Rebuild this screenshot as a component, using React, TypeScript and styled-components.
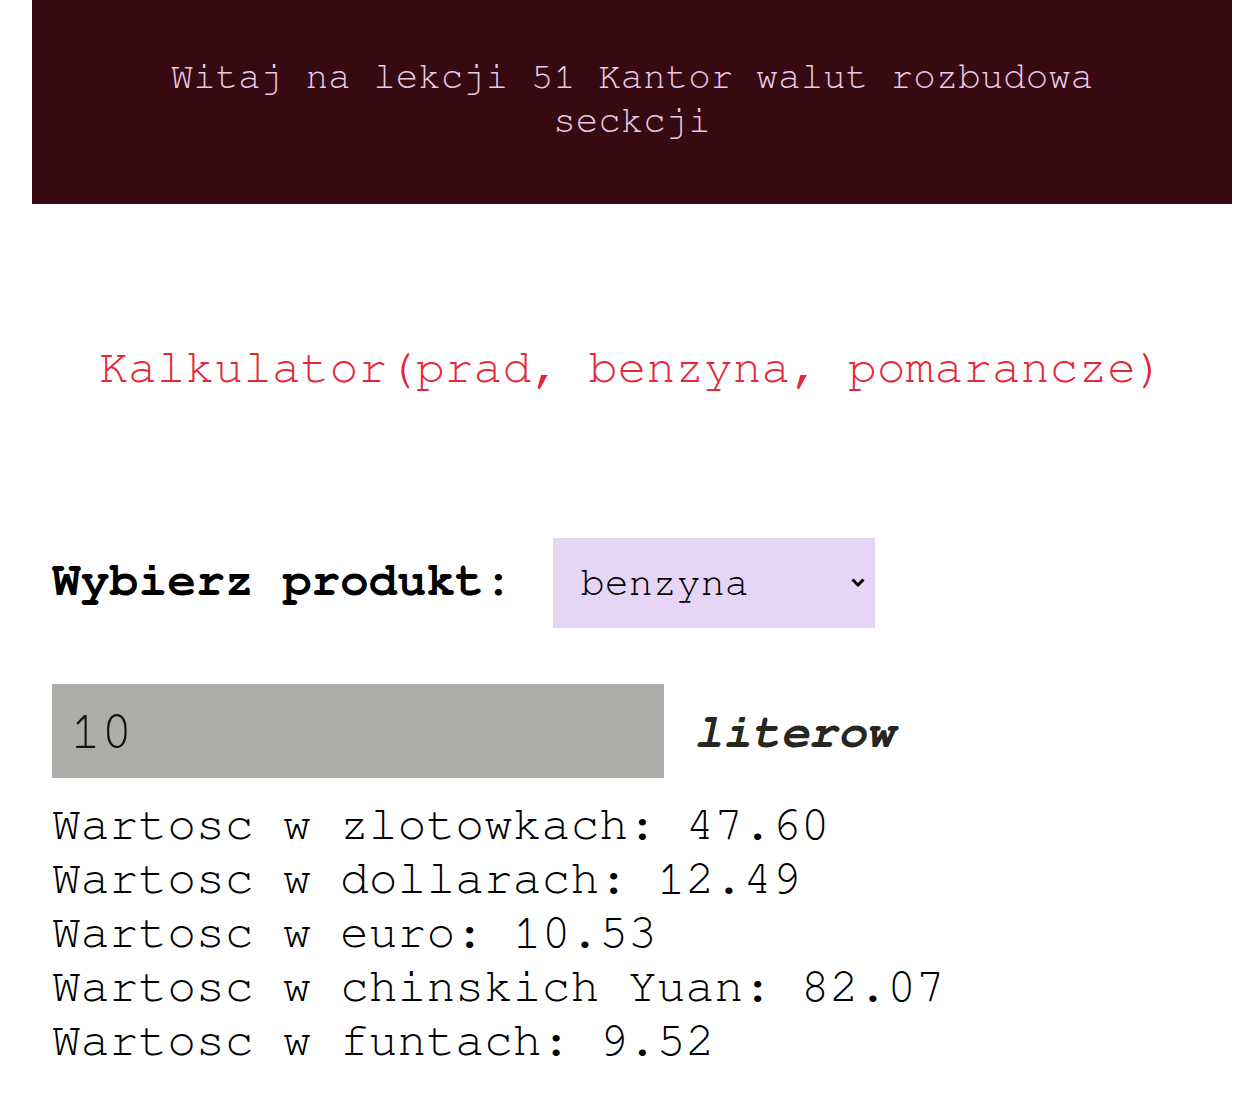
import React, { useState } from "react";
import styled, { createGlobalStyle } from "styled-components";

const MONO = `"FreeMono", "Liberation Mono", "Courier New", monospace`;

const GlobalStyle = createGlobalStyle`
  html, body {
    margin: 0;
    padding: 0;
    background: #ffffff;
  }
  body {
    font-family: ${MONO};
  }
`;

const Page = styled.div`
  width: 1200px;
  margin-left: 32px;
  font-family: ${MONO};
`;

const Header = styled.header`
  background: #360a10;
  color: #e8c9ea;
  text-align: center;
  font-size: 37.5px;
  line-height: 44px;
  padding: 55px 120px 61px;
`;

const Title = styled.h2`
  margin: 140px 0 0;
  color: #e62639;
  font-size: 48px;
  font-weight: normal;
  text-align: center;
  line-height: normal;
`;

const Section = styled.section`
  padding: 0 20px;
`;

const Row = styled.div<{ $top: number; $gap: number }>`
  display: flex;
  align-items: baseline;
  gap: ${(p) => p.$gap}px;
  margin-top: ${(p) => p.$top}px;
`;

const Label = styled.label`
  font-size: 48px;
  font-weight: bold;
  color: #000;
`;

const SelectWrap = styled.div`
  position: relative;
  display: inline-flex;
`;

const Select = styled.select`
  appearance: none;
  -webkit-appearance: none;
  width: 322px;
  height: 90px;
  background-color: #e6d5f5;
  border: none;
  border-radius: 0;
  padding: 0 40px 0 28px;
  font-family: ${MONO};
  font-size: 40px;
  color: #000;
  outline: none;
`;

const Chevron = styled.svg`
  position: absolute;
  right: 9px;
  top: 50%;
  margin-top: -6px;
  width: 16px;
  height: 11px;
  pointer-events: none;
`;

const Amount = styled.input`
  width: 612px;
  height: 94px;
  box-sizing: border-box;
  background: #adaeaa;
  border: none;
  border-radius: 0;
  padding: 0 18px;
  font-family: ${MONO};
  font-size: 52px;
  color: #111;
  outline: none;
`;

const Unit = styled.span`
  font-size: 48px;
  font-weight: bold;
  font-style: italic;
  color: #262820;
`;

const Results = styled.div`
  margin-top: 20px;
  font-size: 48px;
  line-height: 54px;
  color: #000;
`;

const ResultLine = styled.div`
  white-space: pre;
`;

const rates = [
  { label: "zlotowkach", value: "47.60" },
  { label: "dollarach", value: "12.49" },
  { label: "euro", value: "10.53" },
  { label: "chinskich Yuan", value: "82.07" },
  { label: "funtach", value: "9.52" },
];

export default function App() {
  const [product, setProduct] = useState("benzyna");
  const [amount, setAmount] = useState("10");
  return (
    <>
      <GlobalStyle />
      <Page>
        <Header>Witaj na lekcji 51 Kantor walut rozbudowa seckcji</Header>
        <Title>Kalkulator(prad, benzyna, pomarancze)</Title>
        <Section>
          <Row $top={146} $gap={40}>
            <Label htmlFor="product">Wybierz produkt:</Label>
            <SelectWrap>
              <Select id="product" value={product} onChange={(e) => setProduct(e.target.value)}>
                <option value="prad">prad</option>
                <option value="benzyna">benzyna</option>
                <option value="pomarancze">pomarancze</option>
              </Select>
              <Chevron viewBox="0 0 16 11">
                <path d="M2.5 2.5 L8 8 L13.5 2.5" fill="none" stroke="#000" strokeWidth="3" />
              </Chevron>
            </SelectWrap>
          </Row>
          <Row $top={56} $gap={30}>
            <Amount type="text" value={amount} onChange={(e) => setAmount(e.target.value)} />
            <Unit>literow</Unit>
          </Row>
          <Results>
            {rates.map((r) => (
              <ResultLine key={r.label}>
                Wartosc w {r.label}: {r.value}
              </ResultLine>
            ))}
          </Results>
        </Section>
      </Page>
    </>
  );
}
